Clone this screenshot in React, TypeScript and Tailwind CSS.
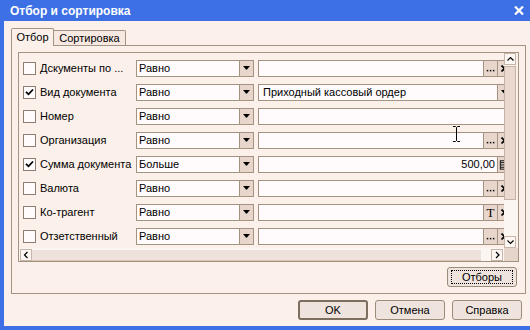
import React from 'react';

type Btn = 'dots' | 'x' | 'drop' | 'calc' | 'T';

interface FilterRow {
  checked: boolean;
  label: string;
  cond: string;
  value?: string;
  alignRight?: boolean;
  buttons: Btn[];
}

const rows: FilterRow[] = [
  { checked: false, label: 'Дскументы по ...', cond: 'Равно', buttons: ['dots', 'x'] },
  { checked: true, label: 'Вид документа', cond: 'Равно', value: 'Приходный кассовый ордер', buttons: ['drop'] },
  { checked: false, label: 'Номер', cond: 'Равно', buttons: [] },
  { checked: false, label: 'Организация', cond: 'Равно', buttons: ['dots', 'x'] },
  { checked: true, label: 'Сумма документа', cond: 'Больше', value: '500,00', alignRight: true, buttons: ['calc'] },
  { checked: false, label: 'Валюта', cond: 'Равно', buttons: ['dots', 'x'] },
  { checked: false, label: 'Ко-трагент', cond: 'Равно', buttons: ['T', 'x'] },
  { checked: false, label: 'Отзетственный', cond: 'Равно', buttons: ['dots', 'x'] },
];

const Triangle = () => (
  <svg width="7" height="4" viewBox="0 0 7 4">
    <path d="M0 0 H7 L3.5 4 Z" fill="#000" />
  </svg>
);

const Checkbox = ({ checked }: { checked: boolean }) => (
  <div className="flex h-[13px] w-[13px] shrink-0 items-center justify-center border border-[#8d7f70] bg-[#fffbfd]">
    {checked && (
      <svg width="9" height="8" viewBox="0 0 9 8">
        <path d="M1 3.8 L3.5 6.3 L8 1.5" fill="none" stroke="#000" strokeWidth="1.8" />
      </svg>
    )}
  </div>
);

const FieldButton = ({ kind }: { kind: Btn }) => (
  <div className="flex w-[14px] shrink-0 items-center justify-center border-l border-[#a39380] bg-[#e8d6cc]">
    {kind === 'dots' && (
      <svg width="14" height="15" viewBox="0 0 14 15">
        <rect x="3" y="9" width="1.6" height="1.6" fill="#000" />
        <rect x="6.3" y="9" width="1.6" height="1.6" fill="#000" />
        <rect x="9.6" y="9" width="1.6" height="1.6" fill="#000" />
      </svg>
    )}
    {kind === 'x' && (
      <svg width="7" height="7" viewBox="0 0 7 7">
        <path d="M0.5 0.5 L6.5 6.5 M6.5 0.5 L0.5 6.5" stroke="#000" strokeWidth="1.6" />
      </svg>
    )}
    {kind === 'drop' && <Triangle />}
    {kind === 'calc' && (
      <svg width="14" height="15" viewBox="0 0 14 15">
        <rect x="2.5" y="3.5" width="6" height="9" fill="none" stroke="#000" />
        <path d="M3 5.5 H8 M3 8 H8 M3 10.5 H8" stroke="#000" />
      </svg>
    )}
    {kind === 'T' && <span className="font-['Liberation_Serif',serif] text-[13px] leading-none">T</span>}
  </div>
);

const Row = ({ row }: { row: FilterRow }) => (
  <div className="flex h-[24px] shrink-0 items-center pl-[4px]">
    <Checkbox checked={row.checked} />
    <span className="ml-[4px] w-[96px] shrink-0 whitespace-nowrap">{row.label}</span>
    <div className="flex h-[17px] w-[118px] shrink-0 border border-[#a39380] bg-[#fffbfd]">
      <span className="flex-1 pl-[2px] leading-[15px]">{row.cond}</span>
      <div className="flex w-[14px] items-center justify-center border-l border-[#a39380] bg-[#e8d6cc]">
        <Triangle />
      </div>
    </div>
    <div className="ml-[4px] flex h-[17px] w-[254px] shrink-0 border border-[#a39380] bg-[#fffbfd]">
      <span className={`flex-1 whitespace-nowrap leading-[15px] ${row.alignRight ? 'pr-[2px] text-right' : 'pl-[4px]'}`}>
        {row.value ?? ''}
      </span>
      {row.buttons.map((b, i) => (
        <FieldButton key={i} kind={b} />
      ))}
    </div>
  </div>
);

const Chevron = ({ dir }: { dir: 'up' | 'down' | 'left' | 'right' }) => {
  const d = {
    up: 'M1.5 5.5 L4.5 2.5 L7.5 5.5',
    down: 'M1.5 2.5 L4.5 5.5 L7.5 2.5',
    left: 'M5.5 1 L2.5 4 L5.5 7',
    right: 'M3 1 L6 4 L3 7',
  }[dir];
  return (
    <svg width="9" height="8" viewBox="0 0 9 8">
      <path d={d} fill="none" stroke="#000" strokeWidth="1.2" />
    </svg>
  );
};

const ArrowBox = ({ dir }: { dir: 'up' | 'down' | 'left' | 'right' }) => (
  <div className="flex h-[12px] w-[12px] shrink-0 items-center justify-center border border-[#c6b5a8] bg-[#fdf7f4]">
    <Chevron dir={dir} />
  </div>
);

const Button = ({ label, isDefault, focused }: { label: string; isDefault?: boolean; focused?: boolean }) => (
  <div
    className={`flex h-[20px] w-[70px] items-center justify-center rounded-[3px] bg-[#efe3dd] ${
      isDefault ? 'border-2 border-[#7d6f60]' : 'border border-[#9a8b7b]'
    }`}
  >
    {focused ? (
      <div className="flex h-[14px] w-[62px] items-center justify-center border border-dotted border-black">{label}</div>
    ) : (
      label
    )}
  </div>
);

export default function App() {
  return (
    <div className="relative flex h-[330px] w-[530px] flex-col overflow-hidden bg-[#3d6fe5] font-['Liberation_Sans',Arial,sans-serif] text-[11px] text-black">
      <div className="flex h-[21px] shrink-0 items-center pl-[10px] pr-[6px] text-[12px] font-bold text-white">
        <span className="flex-1">Отбор и сортировка</span>
        <svg width="10" height="9" viewBox="0 0 10 9">
          <path d="M1 0.5 L9 8.5 M9 0.5 L1 8.5" stroke="#fff" strokeWidth="2.2" />
        </svg>
      </div>

      <div className="mb-[4px] ml-[4px] flex flex-1 flex-col bg-[#fbf0ea] pl-[7px] pt-[7px]">
        {/* tabs */}
        <div className="flex h-[17px] items-end">
          <div className="relative z-10 -mb-px flex h-[18px] w-[43px] items-center justify-center rounded-t-[2px] border-x border-t border-[#a39380] bg-[#fbf0ea] pb-[1px]">
            Отбор
          </div>
          <div className="flex h-[15px] w-[72px] items-center justify-center rounded-tr-[2px] border-r border-t border-[#a39380] bg-[#f7e9e2]">
            Сортировка
          </div>
        </div>

        <div className="flex h-[249px] w-[515px] flex-col border border-[#a39380] p-[6px]">
          <div className="flex h-[210px] w-[501px] flex-col border border-[#a39380]">
            <div className="flex h-[195px]">
              <div className="flex flex-1 flex-col overflow-hidden pt-[3px]">
                {rows.map((r, i) => (
                  <Row key={i} row={r} />
                ))}
              </div>
              <div className="flex w-[14px] flex-col pr-[1px]">
                <ArrowBox dir="up" />
                <div className="mt-px h-[134px] w-[12px] border border-[#c6b3a7] bg-[#ebd9cf]" />
                <div className="flex-1 bg-[#fcf6f3]" />
                <ArrowBox dir="down" />
              </div>
            </div>
            <div className="flex h-[13px]">
              <div className="flex flex-1 items-center bg-[#fcf6f3] pl-px">
                <ArrowBox dir="left" />
                <div className="h-[12px] w-[449px] border-b border-[#d6c5ba] border-t border-t-[#fbf4f1] bg-[#efe1db]" />
                <div className="flex-1" />
                <ArrowBox dir="right" />
                <div className="w-px" />
              </div>
              <div className="w-[14px] bg-[#e6d5cb]" />
            </div>
          </div>
          <div className="mt-[5px] flex justify-end pr-[2px]">
            <Button label="Отборы" focused />
          </div>
        </div>

        <div className="mt-[6px] flex w-[511px] justify-end gap-[7px]">
          <Button label="OK" isDefault />
          <Button label="Отмена" />
          <Button label="Справка" />
        </div>
      </div>

      {/* mouse cursor over the grid */}
      <svg className="absolute left-[452px] top-[126px]" width="9" height="16" viewBox="0 0 9 16">
        <path d="M1 0.5 H3.5 L4.5 1.5 L5.5 0.5 H8 M4.5 1.5 V14.5 M1 15.5 H3.5 L4.5 14.5 L5.5 15.5 H8" fill="none" stroke="#000" />
      </svg>
    </div>
  );
}
